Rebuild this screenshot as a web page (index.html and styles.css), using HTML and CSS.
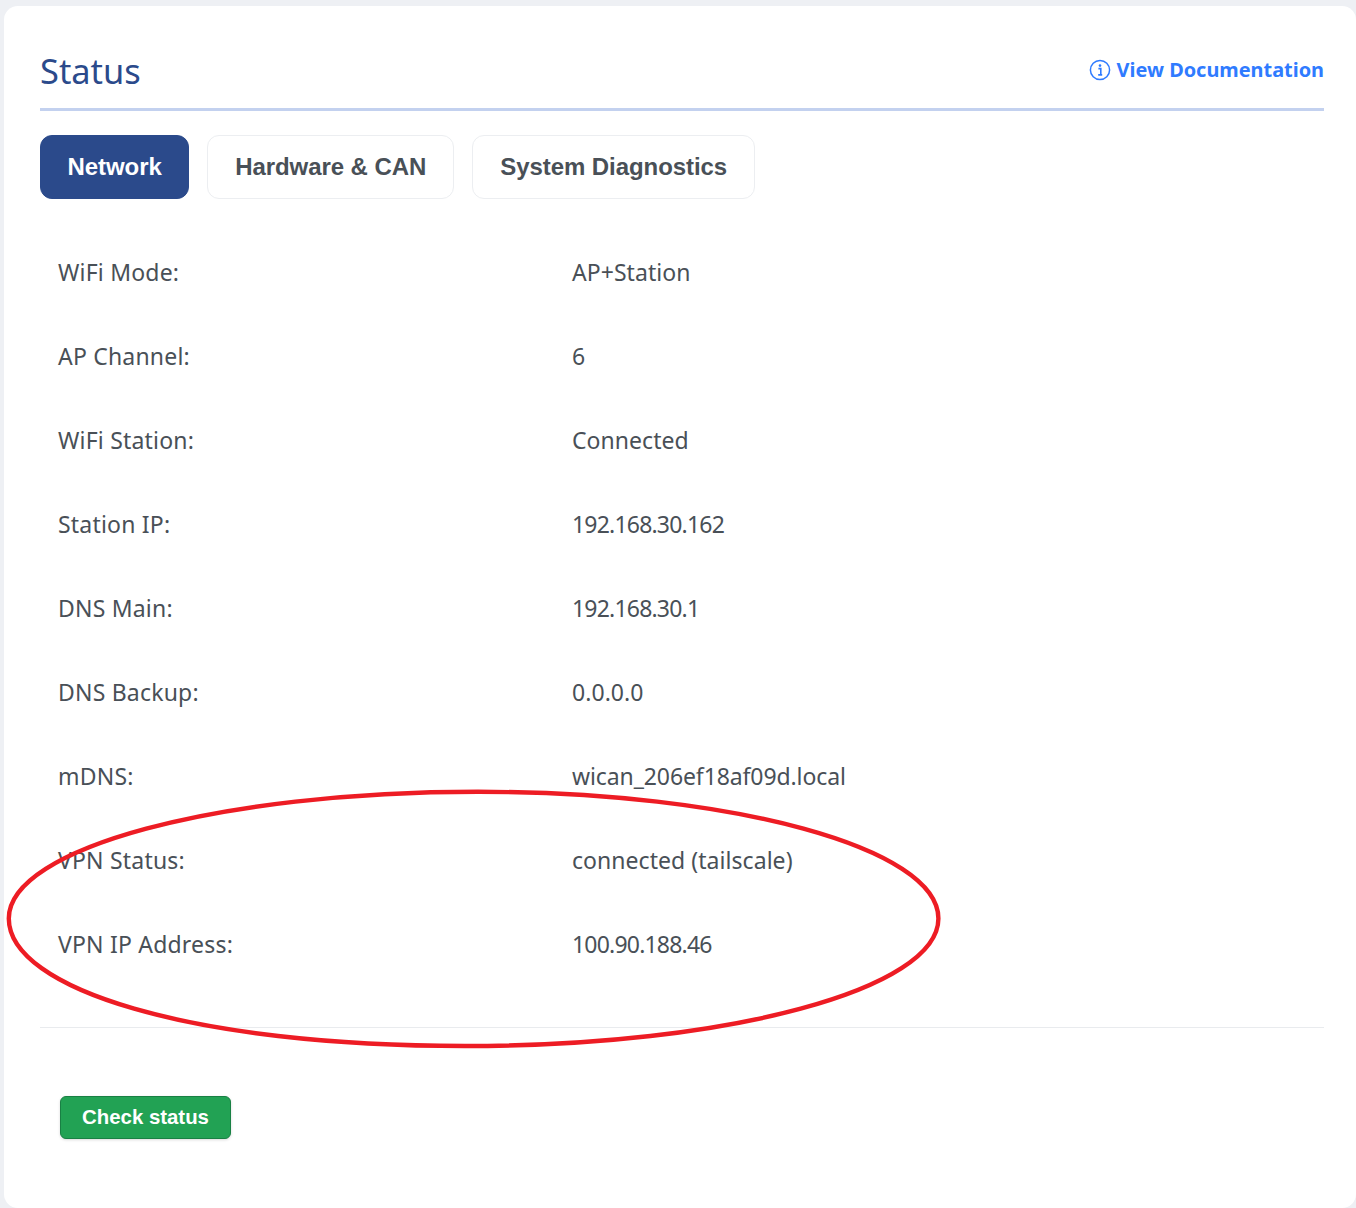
FILE: index.html
```html
<!DOCTYPE html>
<html lang="en">
<head>
<meta charset="utf-8">
<title>Status</title>
<link rel="stylesheet" href="styles.css">
</head>
<body>
<main class="card">
  <header class="head">
    <h1 class="title">Status</h1>
    <a class="doc" href="#">
      <svg class="doc-icon" viewBox="0 0 22 22" aria-hidden="true">
        <circle cx="11" cy="11" r="9.6" fill="none" stroke="currentColor" stroke-width="1.5"/>
        <circle cx="11" cy="6.6" r="1.3" fill="currentColor"/>
        <path d="M9.4 9.6H11.8V15.4M9.2 15.9H13.2" fill="none" stroke="currentColor" stroke-width="1.6"/>
      </svg>
      <span>View Documentation</span>
    </a>
  </header>
  <nav class="tabs">
    <button class="tab active">Network</button>
    <button class="tab">Hardware &amp; CAN</button>
    <button class="tab">System Diagnostics</button>
  </nav>
  <div class="rows">
    <div class="row"><span class="key">WiFi Mode:</span><span class="val">AP+Station</span></div>
    <div class="row"><span class="key">AP Channel:</span><span class="val">6</span></div>
    <div class="row"><span class="key">WiFi Station:</span><span class="val">Connected</span></div>
    <div class="row"><span class="key">Station IP:</span><span class="val num">192.168.30.162</span></div>
    <div class="row"><span class="key">DNS Main:</span><span class="val num">192.168.30.1</span></div>
    <div class="row"><span class="key">DNS Backup:</span><span class="val">0.0.0.0</span></div>
    <div class="row"><span class="key">mDNS:</span><span class="val host">wican_206ef18af09d.local</span></div>
    <div class="row"><span class="key">VPN Status:</span><span class="val">connected (tailscale)</span></div>
    <div class="row"><span class="key">VPN IP Address:</span><span class="val num">100.90.188.46</span></div>
  </div>
  <footer class="foot">
    <button class="check">Check status</button>
  </footer>
</main>
<svg class="annotation" viewBox="0 0 1356 1208" aria-hidden="true">
  <path d="M8.8 918.5C8.8 848 219 791.8 478 791.8C732 791.8 938.4 848 938.4 918.5C938.4 989 729 1046 465 1046C191 1046 8.8 989 8.8 918.5Z" fill="none" stroke="#ed1c24" stroke-width="4.4"/>
</svg>
</body>
</html>
```
FILE: styles.css
```css
* { box-sizing: border-box; }
html, body { height: 100%; }
body {
  margin: 0;
  padding: 6px 0 0 4px;
  background: #eef0f4;
  overflow: hidden;
  position: relative;
}
.card {
  height: 1202px;
  background: #fff;
  border-radius: 14px;
  padding: 36px 32px 0 36px;
  font-family: "Noto Sans", "Open Sans", sans-serif;
  color: #495057;
}
.head {
  display: flex;
  justify-content: space-between;
  align-items: center;
  height: 69px;
  border-bottom: 3px solid #c3d1ef;
  padding-bottom: 9px;
}
.title {
  margin: 0;
  font-size: 34.4px;
  font-weight: 400;
  line-height: 54px;
  color: #2b4a8b;
}
.doc {
  display: flex;
  align-items: center;
  gap: 6px;
  color: #2f7bff;
  font-size: 19.9px;
  font-weight: 700;
  text-decoration: none;
  position: relative;
  top: -1px;
}
.doc-icon { width: 22px; height: 22px; }
.tabs {
  display: flex;
  gap: 18px;
  margin-top: 24px;
}
.tab {
  height: 64px;
  padding: 0 27px;
  border: 1px solid #eceef1;
  border-radius: 12px;
  background: #fff;
  color: #495057;
  font-family: "Liberation Sans", Arial, sans-serif;
  font-size: 24px;
  font-weight: 700;
  letter-spacing: -.07px;
}
.tab.active {
  padding: 0 26.5px;
  background: #2b4a8b;
  border-color: #2b4a8b;
  color: #fff;
}
.rows { margin-top: 32px; }
.row {
  display: grid;
  grid-template-columns: 514px 1fr;
  height: 84px;
  align-items: center;
  padding: 0 0 2px 18px;
  font-size: 23px;
}
.key { letter-spacing: .2px; }
.val { letter-spacing: .05px; }
.num { letter-spacing: -.8px; }
.host { letter-spacing: -.1px; }
.foot {
  margin-top: 40px;
  border-top: 1px solid #e9ebee;
  padding: 68px 0 0 20px;
}
.check {
  display: block;
  width: 171px;
  height: 43px;
  padding: 0;
  border: 1px solid #198044;
  border-radius: 6px;
  background: #22a254;
  color: #fff;
  font-family: "Liberation Sans", Arial, sans-serif;
  font-size: 20.4px;
  font-weight: 700;
  box-shadow: 0 1px 3px rgba(0, 0, 0, .15);
}
.annotation {
  position: absolute;
  left: 0;
  top: 0;
  width: 1356px;
  height: 1208px;
  pointer-events: none;
}
```
